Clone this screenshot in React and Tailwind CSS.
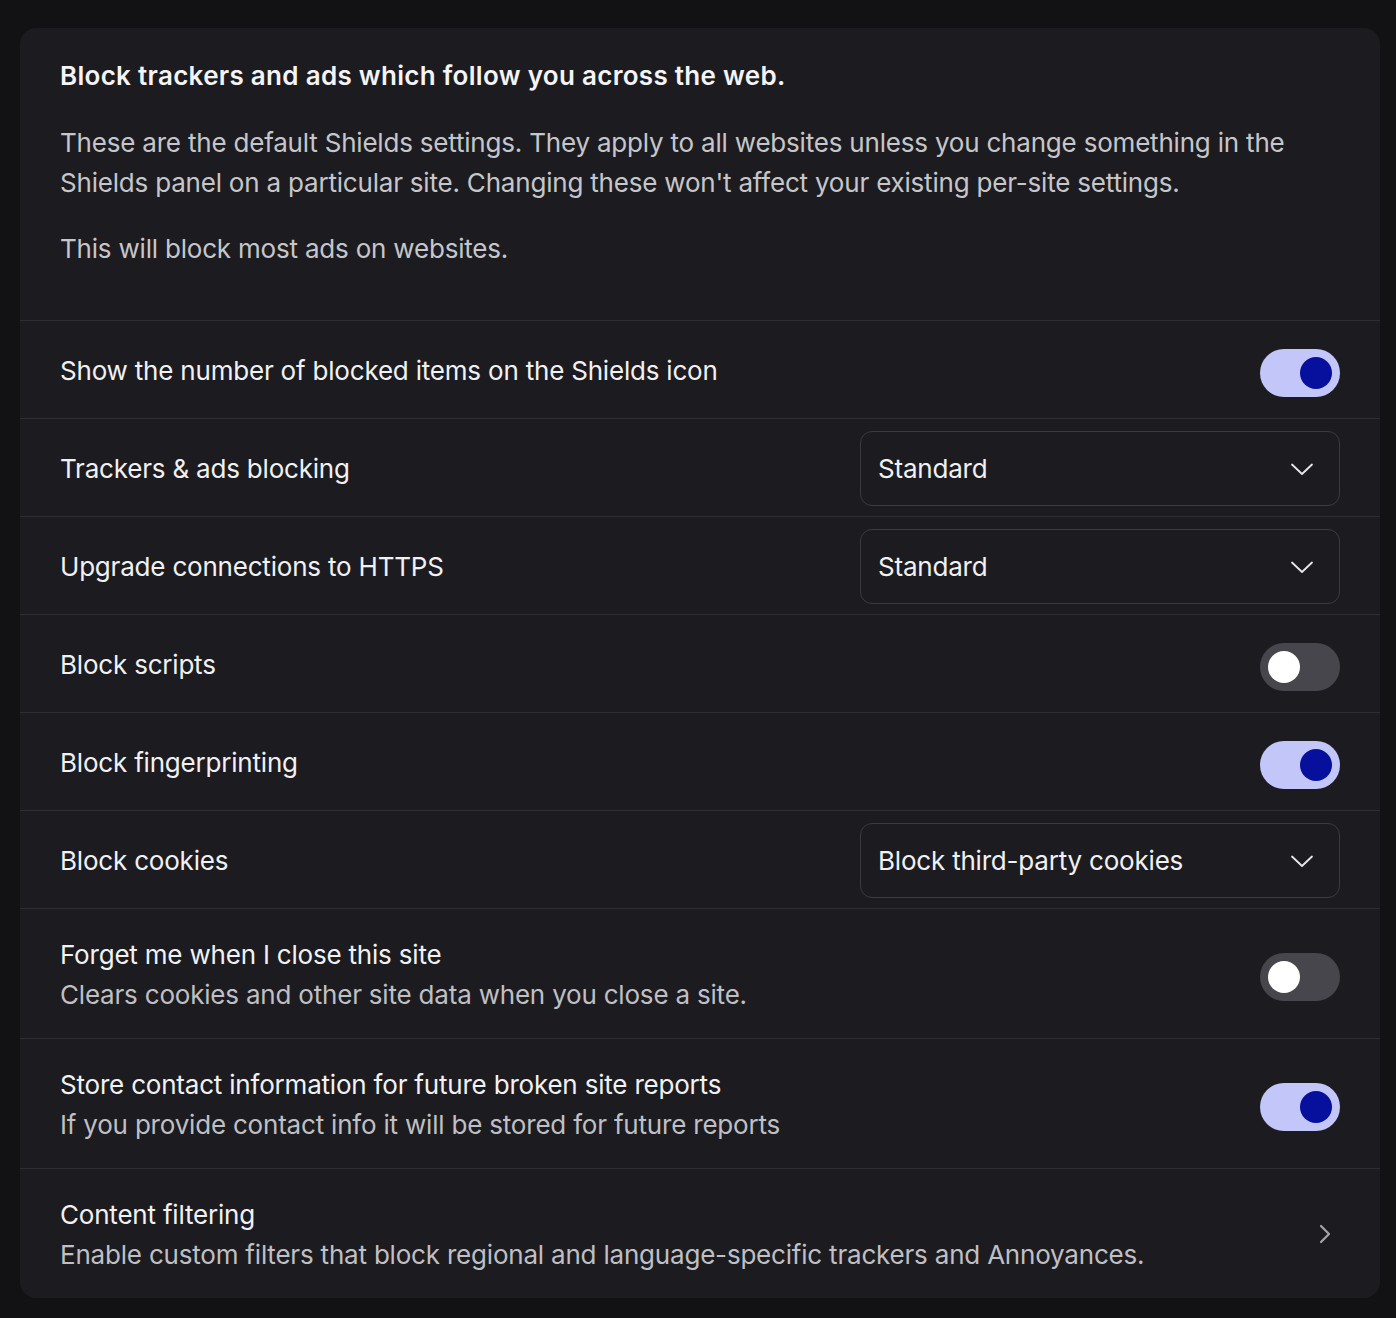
import React, { useState } from 'react';

const Toggle = ({ on, onChange }) => (
  <button
    onClick={onChange}
    className={`flex items-center w-[80px] h-[48px] mt-[6px] rounded-full px-[8px] shrink-0 ${
      on ? 'bg-[#c3c6f8] justify-end' : 'bg-[#46464c] justify-start'
    }`}
  >
    <span
      className={`block w-[32px] h-[32px] rounded-full ${on ? 'bg-[#06109c]' : 'bg-white'}`}
    />
  </button>
);

const Select = ({ value }) => (
  <div className="flex items-center justify-between w-[480px] h-[75px] mt-[2px] rounded-[12px] border border-[#3a3a40] pl-[17px] pr-[25px] shrink-0">
    <span className="text-[26px] tracking-[-0.2px] text-[#f1f1f3]">{value}</span>
    <svg width="24" height="24" viewBox="0 0 24 24" fill="none" stroke="#e8e8ea" strokeWidth="1.8" strokeLinecap="round" strokeLinejoin="round">
      <path d="M2 7.5l10 9.5 10-9.5" />
    </svg>
  </div>
);

const Row = ({ title, desc, children }) => (
  <div
    className={`flex items-center justify-between px-[40px] border-t border-[#2f2f33] ${
      desc ? 'h-[130px]' : 'h-[98px]'
    }`}
  >
    <div className="flex flex-col pt-[3px]">
      <span className="text-[26px] tracking-[-0.2px] leading-[40px] text-[#f1f1f3]">{title}</span>
      {desc && (
        <span className="text-[26px] tracking-[-0.2px] leading-[40px] text-[#bfbfc4]">{desc}</span>
      )}
    </div>
    {children}
  </div>
);

export default function App() {
  const [toggles, setToggles] = useState({
    count: true,
    scripts: false,
    fingerprint: true,
    forget: false,
    contact: true,
  });
  const flip = (k) => setToggles({ ...toggles, [k]: !toggles[k] });

  return (
    <div
      className="h-[1318px] overflow-hidden bg-[#121214] pl-[20px] pr-[16px] pt-[28px]"
      style={{ fontFamily: 'Inter, "Noto Sans", sans-serif' }}
    >
      <div className="bg-[#1c1c20] rounded-[16px] overflow-hidden">
        {/* Header */}
        <div className="px-[40px] pt-[33px] pb-[51px]">
          <h1 className="text-[26px] leading-[30px] font-semibold tracking-[0.3px] text-[#f4f4f6]">
            Block trackers and ads which follow you across the web.
          </h1>
          <p className="mt-[32px] text-[26px] tracking-[-0.2px] leading-[40px] text-[#c6c6ca]">
            These are the default Shields settings. They apply to all websites unless you change something in the
            Shields panel on a particular site. Changing these won't affect your existing per-site settings.
          </p>
          <p className="mt-[26px] text-[26px] tracking-[-0.2px] leading-[40px] text-[#c6c6ca]">
            This will block most ads on websites.
          </p>
        </div>

        <Row title="Show the number of blocked items on the Shields icon">
          <Toggle on={toggles.count} onChange={() => flip('count')} />
        </Row>
        <Row title="Trackers & ads blocking">
          <Select value="Standard" />
        </Row>
        <Row title="Upgrade connections to HTTPS">
          <Select value="Standard" />
        </Row>
        <Row title="Block scripts">
          <Toggle on={toggles.scripts} onChange={() => flip('scripts')} />
        </Row>
        <Row title="Block fingerprinting">
          <Toggle on={toggles.fingerprint} onChange={() => flip('fingerprint')} />
        </Row>
        <Row title="Block cookies">
          <Select value="Block third-party cookies" />
        </Row>
        <Row title="Forget me when I close this site" desc="Clears cookies and other site data when you close a site.">
          <Toggle on={toggles.forget} onChange={() => flip('forget')} />
        </Row>
        <Row
          title="Store contact information for future broken site reports"
          desc="If you provide contact info it will be stored for future reports"
        >
          <Toggle on={toggles.contact} onChange={() => flip('contact')} />
        </Row>
        <Row
          title="Content filtering"
          desc="Enable custom filters that block regional and language-specific trackers and Annoyances."
        >
          <svg className="mr-[8px]" width="14" height="22" viewBox="0 0 14 22" fill="none" stroke="#a4a4aa" strokeWidth="2.2" strokeLinecap="round" strokeLinejoin="round">
            <path d="M3 3l8 8-8 8" />
          </svg>
        </Row>
      </div>
    </div>
  );
}
